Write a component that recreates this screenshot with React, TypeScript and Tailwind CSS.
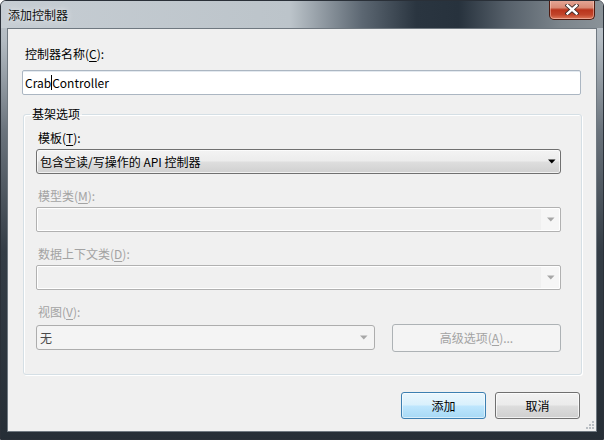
import type { ReactNode } from "react";

const font = "font-['Noto_Sans_CJK_SC','Microsoft_YaHei',sans-serif]";

function Key({ children }: { children: ReactNode }) {
  return <span className="underline underline-offset-[2px]">{children}</span>;
}

function Arrow({ color }: { color: string }) {
  return (
    <svg width="8" height="5" viewBox="0 0 8 5" className="shrink-0">
      <path d="M0 0.5h7.5L3.75 4.5z" fill={color} />
    </svg>
  );
}

function DisabledCombo({ className }: { className: string }) {
  return (
    <div className={`flex h-[25px] w-[525px] rounded-[2px] border border-[#b1b1b1] bg-white p-[1px] ${className}`}>
      <div className="flex-1 bg-[#f0f0f0]" />
      <div className="flex w-[18px] items-center justify-center bg-[#f6f6f6] pl-[2px]">
        <Arrow color="#a7a7a7" />
      </div>
    </div>
  );
}

function Label({ disabled, className, children }: { disabled?: boolean; className: string; children: ReactNode }) {
  return (
    <div className={`ml-[14px] h-[16px] leading-[16px] ${disabled ? "text-[#a3a3a3]" : "text-black"} ${className}`}>
      {children}
    </div>
  );
}

export default function App() {
  return (
    <div
      className={`${font} flex h-[440px] w-[604px] flex-col overflow-hidden rounded-t-[6px] border border-[#2a3038] bg-[linear-gradient(180deg,#c2c9cf_0px,#b3bbc2_40px,#6a737c_130px,#343d46_250px,#262e36_100%)] text-[12px] text-black`}
    >
      {/* title bar */}
      <div className="flex h-[27px] shrink-0 items-center bg-[linear-gradient(90deg,#c6cdd3_0%,#bcc4ca_48%,#5c6772_60%,#2a3540_69%,#27323d_76%,#56606a_84%,#7c858c_93%,#8a9298_100%)]">
        <span className="pl-[7px] pt-[1px] leading-[16px] text-[#111] [text-shadow:0_0_6px_rgba(255,255,255,0.9)]">
          添加控制器
        </span>
        <div className="mt-[-1px] mr-[8px] ml-auto flex h-[20px] w-[46px] items-center justify-center self-start rounded-b-[5px] border border-t-0 border-[#4e1a0f] bg-[linear-gradient(180deg,#e6a999_0%,#d98a75_40%,#b9341c_52%,#c1452b_78%,#de7a5c_100%)] shadow-[inset_0_0_0_1px_rgba(255,220,210,0.45)]">
          <svg width="14" height="11" viewBox="0 0 14 11">
            <path d="M2.5 1.5L11.5 9.5M11.5 1.5L2.5 9.5" stroke="#3a2a28" strokeWidth="4.2" strokeLinecap="square" />
            <path d="M2.5 1.5L11.5 9.5M11.5 1.5L2.5 9.5" stroke="#ffffff" strokeWidth="2.4" strokeLinecap="square" />
          </svg>
        </div>
      </div>

      {/* client area */}
      <div className="flex flex-1 px-[6px] pb-[7px]">
        <div className="relative flex flex-1 flex-col border border-[#6f7880] bg-[#f0f0f0]">
          <div className="mt-[17px] ml-[17px] h-[16px] leading-[16px]">
            控制器名称(<Key>C</Key>):
          </div>
          <div className="mt-[8px] ml-[14px] flex h-[25px] w-[559px] items-center rounded-[2px] border border-[#abb6c2] bg-white pl-[2px] shadow-[inset_0_1px_0_#e3e9ef]">
            <span>Crab</span>
            <span className="inline-block h-[15px] w-[1px] bg-black" />
            <span>Controller</span>
          </div>

          <fieldset className="mt-[11px] ml-[15px] w-[559px] rounded-[3px] border border-[#d5dfe5] pb-[22px] shadow-[inset_1px_1px_0_#ffffff,1px_1px_0_#ffffff]">
            <legend className="ml-[6px] px-[2px] leading-[16px]">基架选项</legend>

            <Label className="mt-[8px]">
              模板(<Key>T</Key>):
            </Label>
            <div className="mt-[3px] ml-[12px] flex h-[25px] w-[525px] items-center rounded-[3px] border border-[#707070] bg-[linear-gradient(180deg,#f3f3f3_0%,#ececec_48%,#dedede_52%,#d0d0d0_100%)] pr-[4px] pl-[3px] shadow-[inset_0_0_0_1px_rgba(255,255,255,0.7)]">
              <span className="flex-1">包含空读/写操作的 API 控制器</span>
              <Arrow color="#000000" />
            </div>

            <Label disabled className="mt-[14px]">
              模型类(<Key>M</Key>):
            </Label>
            <DisabledCombo className="mt-[3px] ml-[12px]" />

            <Label disabled className="mt-[14px]">
              数据上下文类(<Key>D</Key>):
            </Label>
            <DisabledCombo className="mt-[3px] ml-[12px]" />

            <Label disabled className="mt-[14px]">
              视图(<Key>V</Key>):
            </Label>
            <div className="mt-[4px] ml-[12px] flex items-start gap-[17px]">
              <div className="mt-[1px] flex h-[25px] w-[339px] items-center rounded-[3px] border border-[#adadad] bg-[#f4f4f4] pr-[6px] pl-[3px]">
                <span className="flex-1 text-[#4a4a4a]">无</span>
                <Arrow color="#a7a7a7" />
              </div>
              <div className="flex h-[28px] w-[169px] items-center justify-center rounded-[3px] border border-[#adb2b5] bg-[#f4f4f4] text-[#a3a3a3]">
                高级选项(<Key>A</Key>)...
              </div>
            </div>
          </fieldset>

          <div className="mt-[17px] mr-[16px] flex justify-end gap-[9px]">
            <button className="flex h-[27px] w-[85px] items-center justify-center rounded-[3px] border border-[#3c7fb1] bg-[linear-gradient(180deg,#eaf6fd_0%,#d9f0fc_48%,#bee6fd_52%,#a7d9f5_100%)] shadow-[inset_0_0_0_1px_rgba(255,255,255,0.55)]">
              添加
            </button>
            <button className="flex h-[27px] w-[85px] items-center justify-center rounded-[3px] border border-[#707070] bg-[linear-gradient(180deg,#f2f2f2_0%,#ebebeb_48%,#dddddd_52%,#cfcfcf_100%)] shadow-[inset_0_0_0_1px_rgba(255,255,255,0.7)]">
              取消
            </button>
          </div>

          {/* size grip */}
          <svg width="10" height="10" viewBox="0 0 10 10" className="absolute right-[1px] bottom-[1px]">
            <g fill="#b9bec3">
              <rect x="7" y="1" width="2" height="2" />
              <rect x="4" y="4" width="2" height="2" />
              <rect x="7" y="4" width="2" height="2" />
              <rect x="1" y="7" width="2" height="2" />
              <rect x="4" y="7" width="2" height="2" />
              <rect x="7" y="7" width="2" height="2" />
            </g>
          </svg>
        </div>
      </div>
    </div>
  );
}
